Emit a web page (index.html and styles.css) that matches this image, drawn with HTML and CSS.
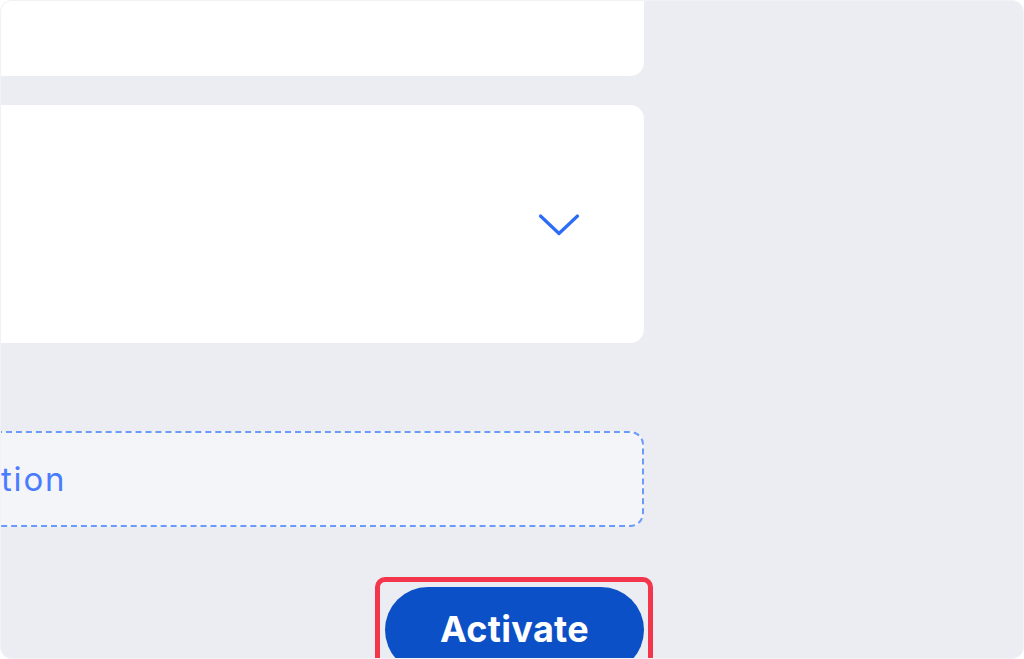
FILE: index.html
```html
<!DOCTYPE html>
<html lang="en">
<head>
<meta charset="utf-8">
<title>Activate</title>
<link rel="stylesheet" href="styles.css">
</head>
<body>
<div class="frame">
  <div class="column">
    <div class="card card-top"></div>
    <div class="card card-select">
      <svg class="chevron" width="42" height="24" viewBox="0 0 42 24" aria-hidden="true">
        <path d="M2.5 3 L21 20.5 L39.5 3" fill="none" stroke="#2d6cf6" stroke-width="3.2" stroke-linecap="round" stroke-linejoin="round"/>
      </svg>
    </div>
    <div class="dashed-box"><span class="dashed-label">tion</span></div>
    <div class="actions">
      <div class="highlight">
        <button class="activate" type="button">Activate</button>
      </div>
    </div>
  </div>
</div>
</body>
</html>
```

FILE: styles.css
```css
* { box-sizing: border-box; }

html, body {
  margin: 0;
  padding: 0;
  background: #ffffff;
}

.frame {
  width: 1024px;
  height: 659px;
  border: 1px solid #f1f1f6;
  border-radius: 12px;
  background: #ebedf2;
  overflow: hidden;
}

.column {
  width: 662px;
  margin-left: -19px;
  display: flex;
  flex-direction: column;
}

.card {
  background: #ffffff;
  border-radius: 14px;
}

.card-top {
  height: 119px;
  margin-top: -44px;
}

.card-select {
  height: 238px;
  margin-top: 29px;
  display: flex;
  align-items: center;
  justify-content: flex-end;
  padding-right: 64px;
  padding-top: 1px;
}

.chevron { display: block; }

.dashed-box {
  height: 96px;
  margin-top: 88px;
  background: #f4f5f8;
  border: 2px dashed #6a9bfa;
  border-radius: 14px;
  display: flex;
  align-items: center;
  padding-left: 17px;
  padding-top: 0;
}

.dashed-label {
  font-family: Inter, "Noto Sans", sans-serif;
  font-size: 33px;
  font-weight: 400;
  color: #4a7cff;
  letter-spacing: 1.8px;
}

.actions {
  margin-top: 50px;
  display: flex;
  justify-content: flex-end;
  margin-right: -9px;
}

.highlight {
  border: 5px solid #f4364c;
  border-radius: 10px;
  padding: 5px 4px 0 5px;
  height: 100px;
}

.activate {
  width: 259px;
  height: 86px;
  border: none;
  border-radius: 43px;
  background: #0b50c6;
  color: #ffffff;
  font-family: Inter, "Noto Sans", sans-serif;
  font-size: 36px;
  font-weight: 650;
  letter-spacing: 0.3px;
  padding: 0 0 2px 0;
  cursor: pointer;
}
```
